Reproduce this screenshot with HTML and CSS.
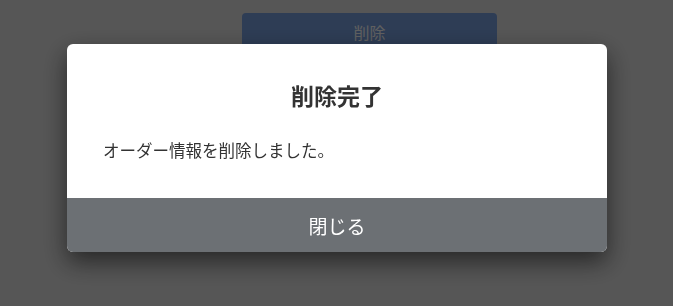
FILE: index.html
```html
<!DOCTYPE html>
<html lang="ja">
<head>
    <meta charset="UTF-8">
    <title>削除完了</title>
    <link rel="stylesheet" href="styles.css">
</head>
<body>
<div class="page">
    <button class="btnDelete">削除</button>
</div>

<div class="overlay">
    <div class="modal">
        <div class="modalBody">
            <h2 class="modalTitle">削除完了</h2>
            <p class="modalText">オーダー情報を削除しました。</p>
        </div>
        <button class="modalClose">閉じる</button>
    </div>
</div>
</body>
</html>
```

FILE: styles.css
```css
*{
    margin: 0;
    padding: 0;
    box-sizing: border-box;
}
html,body{
    height: 100%;
    overflow: hidden;
}
body{
    font-family: "Noto Sans CJK JP", "Noto Sans", sans-serif;
    background-color: #d6d6d6;
    color: #333;
}
.page{
    padding: 13px 0 0 242px;
}
.btnDelete{
    display: block;
    width: 255px;
    height: 44px;
    border: none;
    border-radius: 4px;
    background-color: #7398d4;
    color: #f0f0f0;
    font-family: inherit;
    font-size: 16px;
    line-height: 38px;
    text-align: center;
    padding-bottom: 6px;
}
/*遮罩*/
.overlay{
    position: fixed;
    left: 0;
    top: 0;
    right: 0;
    bottom: 0;
    background-color: rgba(0,0,0,.6);
    padding: 44px 0 0 1px;
}
.modal{
    width: 540px;
    margin: 0 auto;
    background-color: #fff;
    border-radius: 6px;
    overflow: hidden;
    box-shadow: 0 10px 24px rgba(0,0,0,.55);
}
.modalBody{
    padding: 32px 36px 0;
    height: 154px;
}
.modalTitle{
    font-size: 23px;
    font-weight: bold;
    text-align: center;
    line-height: 38px;
    color: #333;
}
.modalText{
    margin-top: 24px;
    font-size: 16.5px;
    line-height: 24px;
    color: #333;
}
.modalClose{
    display: block;
    width: 100%;
    height: 54px;
    border: none;
    background-color: #6c7074;
    color: #fff;
    font-family: inherit;
    font-size: 19px;
    text-align: center;
}
```
